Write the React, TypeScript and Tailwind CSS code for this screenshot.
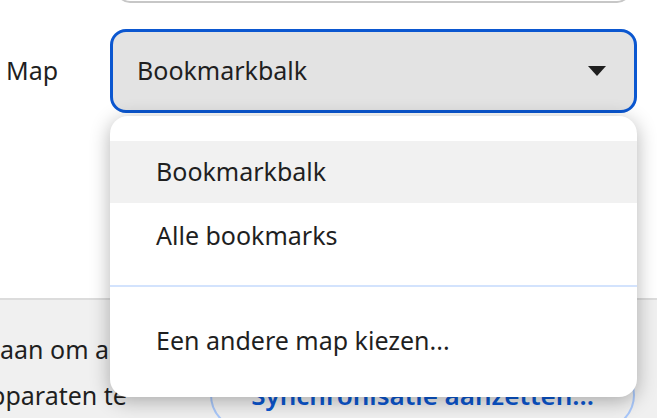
import { useState } from "react"

const font = { fontFamily: '"Noto Sans", "Open Sans", sans-serif' }

export default function App() {
  const [selected] = useState<string>("Bookmarkbalk")

  return (
    <div className="relative flex h-[418px] w-[657px] flex-col overflow-hidden bg-white text-[25px] text-[#1f1f1f]" style={font}>
      {/* bottom edge of the field above */}
      <div className="shrink-0 pl-[116px] pr-[26px]">
        <div className="-mt-[40px] h-[43px] rounded-[14px] border-2 border-[#c7c7c7]" />
      </div>

      {/* Map row */}
      <div className="mt-[26px] flex shrink-0 items-center">
        <div className="w-[110px] pl-[6px]">Map</div>
        <div className="flex h-[84px] w-[527px] items-center justify-between rounded-[16px] border-[3px] border-[#0b57d0] bg-[#e3e3e3] pl-[24px] pr-[28px]">
          <span>{selected}</span>
          <svg width="18" height="10" viewBox="0 0 18 10">
            <path d="M0 0h18L9 10z" fill="#1f1f1f" />
          </svg>
        </div>
      </div>

      <div className="h-[185px] shrink-0" />

      {/* sync section */}
      <div className="flex h-[200px] shrink-0 border-t-2 border-[#dcdcdc] bg-[#f0f0f0]">
        <div className="w-[210px] shrink-0 overflow-hidden pt-[26px] leading-[46px]">
          <div className="whitespace-nowrap">aan om alle</div>
          <div className="-ml-[24px] whitespace-nowrap">apparaten te</div>
        </div>
        <div className="mt-[60px] flex h-[70px] w-[425px] shrink-0 items-center justify-center rounded-full border-2 border-[#a8c7fa] text-[26px] font-semibold text-[#0b57d0]">
          Synchronisatie aanzetten...
        </div>
      </div>

      {/* open dropdown menu */}
      <div className="absolute left-[110px] top-[116px] flex h-[281px] w-[527px] flex-col rounded-[18px] bg-white pt-[25px] shadow-[0_4px_20px_rgba(0,0,0,0.3)]">
        <div className="flex h-[62px] items-center bg-[#f1f1f1] pl-[46px]">Bookmarkbalk</div>
        <div className="flex h-[66px] items-center pl-[46px]">Alle bookmarks</div>
        <div className="mt-[16px] h-[2px] bg-[#d3e3fd]" />
        <div className="flex h-[107px] items-center pl-[46px]">Een andere map kiezen...</div>
      </div>
    </div>
  )
}
